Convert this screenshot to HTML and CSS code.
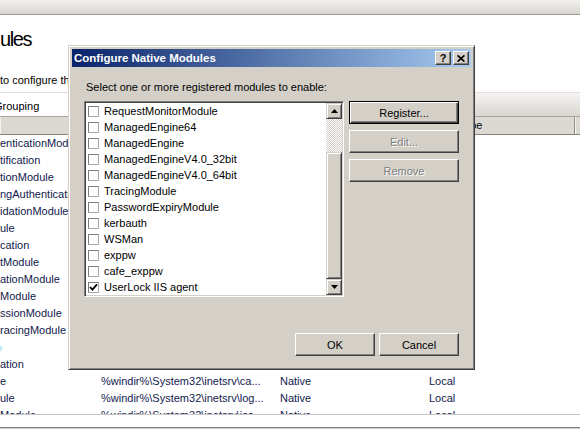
FILE: index.html
```html
<!DOCTYPE html>
<html>
<head>
<meta charset="utf-8">
<title>Configure Native Modules</title>
<link rel="stylesheet" href="styles.css">
</head>
<body>
<div class="app">
  <div class="topbar"></div>
  <div class="pagehead">
    <div class="page-title">ules</div>
    <div class="page-desc">to configure the native modules that can be used to process requests on the Web server.</div>
  </div>
  <div class="toolbar">
    <div class="combo"><span>Grouping</span></div>
  </div>
  <div class="colheader">
    <div class="hc c-name"><span class="offscreen-label">Name</span></div>
    <div class="hc c-code">Code</div>
    <div class="hc c-type">Module Type</div>
    <div class="hc c-entry">Entry Type</div>
    <div class="hc c-rest"></div>
  </div>
  <div class="list">
    <div class="row"><span class="n">enticationModule</span><span class="c">%windir%\System32\inetsrv\au...</span><span class="t">Native</span><span class="e">Local</span></div>
    <div class="row"><span class="n">tification</span><span class="c">%windir%\System32\inetsrv\ce...</span><span class="t">Native</span><span class="e">Local</span></div>
    <div class="row"><span class="n">tionModule</span><span class="c">%windir%\System32\inetsrv\co...</span><span class="t">Native</span><span class="e">Local</span></div>
    <div class="row"><span class="n">ngAuthenticationModule</span><span class="c">%windir%\System32\inetsrv\au...</span><span class="t">Native</span><span class="e">Local</span></div>
    <div class="row"><span class="n">idationModule</span><span class="c">%windir%\System32\inetsrv\va...</span><span class="t">Native</span><span class="e">Local</span></div>
    <div class="row"><span class="n">ule</span><span class="c">%windir%\System32\inetsrv\cu...</span><span class="t">Native</span><span class="e">Local</span></div>
    <div class="row"><span class="n">cation</span><span class="c">%windir%\System32\inetsrv\au...</span><span class="t">Native</span><span class="e">Local</span></div>
    <div class="row"><span class="n">tModule</span><span class="c">%windir%\System32\inetsrv\de...</span><span class="t">Native</span><span class="e">Local</span></div>
    <div class="row"><span class="n">ationModule</span><span class="c">%windir%\System32\inetsrv\di...</span><span class="t">Native</span><span class="e">Local</span></div>
    <div class="row"><span class="n">Module</span><span class="c">%windir%\System32\inetsrv\co...</span><span class="t">Native</span><span class="e">Local</span></div>
    <div class="row"><span class="n">ssionModule</span><span class="c">%windir%\System32\inetsrv\co...</span><span class="t">Native</span><span class="e">Local</span></div>
    <div class="row"><span class="n">racingModule</span><span class="c">%windir%\System32\inetsrv\ia...</span><span class="t">Native</span><span class="e">Local</span></div>
    <div class="row selected"><span class="n"><span class="sel-tail"></span></span><span class="c">%windir%\System32\inetsrv\fi...</span><span class="t">Native</span><span class="e">Local</span></div>
    <div class="row"><span class="n">ation</span><span class="c"></span><span class="t"></span><span class="e"></span></div>
    <div class="row"><span class="n">e</span><span class="c">%windir%\System32\inetsrv\ca...</span><span class="t">Native</span><span class="e">Local</span></div>
    <div class="row"><span class="n">ule</span><span class="c">%windir%\System32\inetsrv\log...</span><span class="t">Native</span><span class="e">Local</span></div>
    <div class="row"><span class="n">Module</span><span class="c">%windir%\System32\inetsrv\iso...</span><span class="t">Native</span><span class="e">Local</span></div>
  </div>
  <div class="footer"></div>
  <div class="footer-edge"></div>
</div>

<div class="dialog">
  <div class="titlebar">
    <span class="title-text">Configure Native Modules</span>
    <div class="tbtns">
      <div class="tbtn">?</div>
      <div class="tbtn"><svg width="8" height="7" viewBox="0 0 8 7"><path d="M0.6 0.4 L7.4 6.6 M7.4 0.4 L0.6 6.6" stroke="#000" stroke-width="1.7" fill="none"/></svg></div>
    </div>
  </div>
  <div class="dbody">
    <div class="prompt">Select one or more registered modules to enable:</div>
    <div class="main">
      <div class="listbox">
        <div class="items">
          <div class="item"><span class="cb"></span><span>RequestMonitorModule</span></div>
          <div class="item"><span class="cb"></span><span>ManagedEngine64</span></div>
          <div class="item"><span class="cb"></span><span>ManagedEngine</span></div>
          <div class="item"><span class="cb"></span><span>ManagedEngineV4.0_32bit</span></div>
          <div class="item"><span class="cb"></span><span>ManagedEngineV4.0_64bit</span></div>
          <div class="item"><span class="cb"></span><span>TracingModule</span></div>
          <div class="item"><span class="cb"></span><span>PasswordExpiryModule</span></div>
          <div class="item"><span class="cb"></span><span>kerbauth</span></div>
          <div class="item"><span class="cb"></span><span>WSMan</span></div>
          <div class="item"><span class="cb"></span><span>exppw</span></div>
          <div class="item"><span class="cb"></span><span>cafe_exppw</span></div>
          <div class="item"><span class="cb checked"><svg width="9" height="9" viewBox="0 0 9 9"><path d="M1 4 L3.4 6.6 L8 1.4" stroke="#000" stroke-width="1.8" fill="none"/></svg></span><span>UserLock IIS agent</span></div>
        </div>
        <div class="vscroll">
          <div class="sbtn"><svg width="7" height="4" viewBox="0 0 7 4"><path d="M3.5 0 L7 4 L0 4 Z" fill="#000"/></svg></div>
          <div class="track"></div>
          <div class="thumb"></div>
          <div class="sbtn"><svg width="7" height="4" viewBox="0 0 7 4"><path d="M0 0 L7 0 L3.5 4 Z" fill="#000"/></svg></div>
        </div>
      </div>
      <div class="side">
        <div class="btn default">Register...</div>
        <div class="btn disabled">Edit...</div>
        <div class="btn disabled">Remove</div>
      </div>
    </div>
    <div class="actions">
      <div class="btn action">OK</div>
      <div class="btn action">Cancel</div>
    </div>
  </div>
</div>
</body>
</html>
```

FILE: styles.css
```css
* { box-sizing: border-box; }
html, body { margin: 0; padding: 0; }
body {
  width: 580px;
  height: 429px;
  overflow: hidden;
  position: relative;
  background: #fff;
  font-family: "Liberation Sans", Arial, sans-serif;
  font-size: 11px;
  color: #000;
}

/* background IIS window */
.app { display: flex; flex-direction: column; height: 429px; }
.topbar {
  height: 15px; flex: none;
  background: linear-gradient(#f1f0ed, #d9d6d0);
  border-bottom: 1px solid #9a9791;
}
.pagehead { height: 77px; flex: none; }
.page-title {
  margin-top: 13px;
  height: 22px;
  font-size: 20px;
  line-height: 22px;
  letter-spacing: -1.4px;
  white-space: nowrap;
}
.page-desc {
  margin-top: 24px;
  line-height: 13px;
  white-space: nowrap;
}
.toolbar {
  height: 25px; flex: none;
  display: flex;
  border-top: 1px solid #e8dcdc;
  border-bottom: 1px solid #aaa69f;
  background: linear-gradient(#f5f4f2, #d9d6d1);
}
.combo {
  width: 110px;
  background: #fff;
  padding-top: 7px;
  line-height: 13px;
  white-space: nowrap;
  overflow: hidden;
}
.combo span { margin-left: -6px; }
.colheader {
  height: 18px; flex: none;
  display: flex;
  background: #dcd9d3;
  border-bottom: 1px solid #85827c;
}
.hc {
  line-height: 17px;
  padding-left: 5px;
  white-space: nowrap;
  overflow: hidden;
  border-right: 1px solid #8f8c86;
  box-shadow: inset 1px 0 #f4f3f0;
}
.c-name { width: 97px; padding-left: 0; }
.offscreen-label { margin-left: -60px; }
.c-code { width: 178px; }
.c-type { width: 150px; }
.c-entry { width: 150px; }
.c-rest { flex: 1; border-right: none; }
.list { flex: 1; overflow: hidden; color: #121a4e; }
.row { display: flex; height: 17px; line-height: 17px; white-space: nowrap; }
.row > span { overflow: hidden; flex: none; }
.row .n { width: 97px; }
.row .c { width: 178px; padding-left: 4px; }
.row .t { width: 149px; padding-left: 5px; }
.row .e { width: 151px; padding-left: 5px; }
.sel-tail {
  display: inline-block;
  width: 2px; height: 5px;
  background: #bfeef8;
  vertical-align: middle;
}
.footer {
  height: 14px; flex: none;
  background: #fff;
  border-top: 1px solid #c6c6c6;
  border-bottom: 1px solid #7f7f7f;
}
.footer-edge { height: 1px; flex: none; background: #d4d0c8; }

/* dialog window */
.dialog {
  position: absolute;
  left: 68px; top: 45px;
  width: 407px; height: 325px;
  background: #d4d0c8;
  border: 1px solid;
  border-color: #d4d0c8 #404040 #404040 #d4d0c8;
  box-shadow: inset 1px 1px #fff, inset -1px -1px #808080;
  padding: 3px;
  display: flex;
  flex-direction: column;
  color: #000;
}
.titlebar {
  height: 18px; flex: none;
  display: flex;
  align-items: center;
  padding: 0 2px;
  background: linear-gradient(to right, #0a246a, #a6caf0);
}
.title-text {
  flex: 1;
  color: #fff;
  font-weight: bold;
  font-size: 11.5px;
  white-space: nowrap;
}
.tbtns { display: flex; gap: 2px; }
.tbtn {
  width: 16px; height: 14px;
  background: #d4d0c8;
  border: 1px solid;
  border-color: #fff #404040 #404040 #fff;
  box-shadow: inset -1px -1px #808080;
  display: flex;
  align-items: center;
  justify-content: center;
  font-weight: bold;
  font-size: 11px;
  line-height: 11px;
}
.dbody {
  flex: 1;
  display: flex;
  flex-direction: column;
  padding: 14px 12px 0;
}
.prompt {
  line-height: 13px;
  margin: 0 0 7px 2px;
  white-space: nowrap;
}
.main { display: flex; gap: 5px; }
.listbox {
  width: 260px; height: 196px;
  background: #fff;
  border: 1px solid;
  border-color: #808080 #fff #fff #808080;
  box-shadow: inset 1px 1px #404040, inset -1px -1px #d4d0c8;
  padding: 1px;
  display: flex;
}
.items { flex: 1; }
.item {
  height: 16px;
  display: flex;
  align-items: center;
  white-space: nowrap;
}
.cb {
  width: 11px; height: 11px;
  flex: none;
  margin: 0 5px 0 2px;
  background: #fff;
  border: 1px solid;
  border-color: #7d7d7d #a9a9a9 #a9a9a9 #7d7d7d;
  display: flex;
  align-items: center;
  justify-content: center;
}
.vscroll { width: 16px; display: flex; flex-direction: column; }
.sbtn, .thumb {
  background: #d4d0c8;
  border: 1px solid;
  border-color: #d4d0c8 #404040 #404040 #d4d0c8;
  box-shadow: inset 1px 1px #fff, inset -1px -1px #808080;
}
.sbtn {
  height: 16px; flex: none;
  display: flex;
  align-items: center;
  justify-content: center;
}
.track {
  height: 33px; flex: none;
  background: repeating-conic-gradient(#fff 0 25%, #d4d0c8 0 50%) 0 0 / 2px 2px;
}
.thumb { flex: 1; }
.side { width: 110px; display: flex; flex-direction: column; gap: 6px; }
.btn {
  height: 23px;
  background: #d4d0c8;
  border: 1px solid;
  border-color: #fff #404040 #404040 #fff;
  box-shadow: inset -1px -1px #808080;
  display: flex;
  align-items: center;
  justify-content: center;
  white-space: nowrap;
}
.btn.default {
  border-color: #000;
  box-shadow: inset 1px 1px #fff, inset -1px -1px #404040, inset -2px -2px #808080;
}
.btn.disabled { color: #808080; text-shadow: 1px 1px #fff; }
.actions {
  margin-top: 36px;
  display: flex;
  justify-content: flex-end;
  gap: 4px;
}
.btn.action { width: 80px; }
```
